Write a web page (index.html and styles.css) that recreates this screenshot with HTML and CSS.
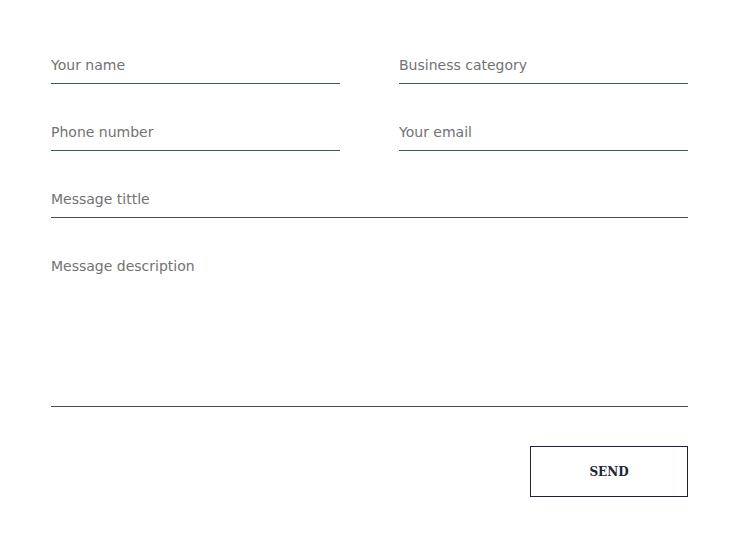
FILE: index.html
```html
<!DOCTYPE html>
<html>
<head>
<meta charset="utf-8">
<link rel="stylesheet" href="styles.css">
</head>
<body>
<form class="form">
  <div class="grid">
    <input class="field" type="text" placeholder="Your name">
    <input class="field" type="text" placeholder="Business category">
    <input class="field" type="text" placeholder="Phone number">
    <input class="field" type="text" placeholder="Your email">
    <input class="field field-wide dark" type="text" placeholder="Message tittle">
    <textarea class="field field-wide area dark" placeholder="Message description"></textarea>
  </div>
  <div class="actions">
    <button class="send" type="button">SEND</button>
  </div>
</form>
</body>
</html>
```
FILE: styles.css
```css
html, body {
  margin: 0;
  padding: 0;
  background: #ffffff;
}
.form {
  width: 637px;
  padding: 50px 0 0 51px;
}
.grid {
  display: grid;
  grid-template-columns: 289px 289px;
  column-gap: 59px;
  row-gap: 33px;
}
.field {
  box-sizing: border-box;
  height: 34px;
  margin: 0;
  padding: 0 0 4px 0;
  border: 0;
  border-bottom: 1px solid #3f5558;
  background: transparent;
  outline: none;
  font-family: "DejaVu Sans", sans-serif;
  font-size: 14px;
  color: #555;
  line-height: 29px;
}
.field::placeholder {
  color: #727272;
  opacity: 1;
}
.field-wide {
  grid-column: 1 / 3;
}
.dark {
  border-bottom-color: #4a4a4a;
}
.area {
  height: 156px;
  resize: none;
  padding: 5px 0 0 0;
  line-height: 20px;
  display: block;
}
.actions {
  display: flex;
  justify-content: flex-end;
  margin-top: 39px;
}
.send {
  box-sizing: border-box;
  width: 158px;
  height: 51px;
  border: 1px solid #1b2436;
  background: #fff;
  font-family: "DejaVu Serif", serif;
  font-weight: bold;
  font-size: 12px;
  color: #1b2436;
  padding: 0;
}
```
